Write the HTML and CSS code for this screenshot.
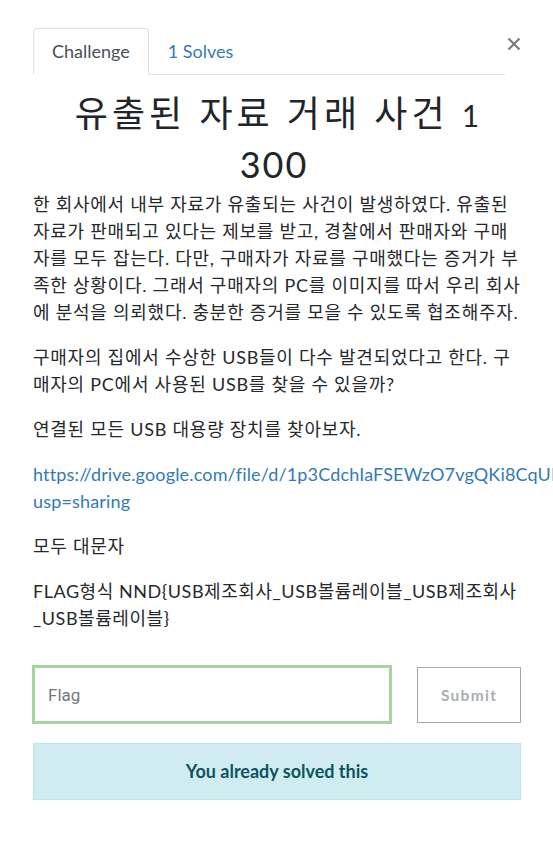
FILE: index.html
```html
<!DOCTYPE html>
<html lang="ko">
<head>
<meta charset="utf-8">
<title>Challenge</title>
<link rel="stylesheet" href="styles.css">
</head>
<body>
<div class="modal">
  <div class="header">
    <ul class="tabs">
      <li class="tab active">Challenge</li>
      <li class="tab"><a class="tab-link" href="#">1 Solves</a></li>
    </ul>
    <button class="close" type="button" aria-label="Close">
      <svg width="14" height="14" viewBox="0 0 14 14"><path d="M1.5 1.5 L12.5 12.5 M12.5 1.5 L1.5 12.5" stroke="#7b7b7b" stroke-width="2.2" fill="none"/></svg>
    </button>
  </div>
  <h2 class="name">유출된 자료 거래 사건 <span class="num">1</span></h2>
  <h3 class="value">300</h3>
  <div class="desc">
    <p>한 회사에서 내부 자료가 유출되는 사건이 발생하였다. 유출된 자료가 판매되고 있다는 제보를 받고, 경찰에서 판매자와 구매자를 모두 잡는다. 다만, 구매자가 자료를 구매했다는 증거가 부족한 상황이다. 그래서 구매자의 PC를 이미지를 따서 우리 회사에 분석을 의뢰했다. 충분한 증거를 모을 수 있도록 협조해주자.</p>
    <p>구매자의 집에서 수상한 USB들이 다수 발견되었다고 한다. 구매자의 PC에서 사용된 USB를 찾을 수 있을까?</p>
    <p>연결된 모든 USB 대용량 장치를 찾아보자.</p>
    <p><a class="link" href="#">https://drive.google.com/file/d/1p3CdchIaFSEWzO7vgQKi8CqUFx2mK9Lr/view?usp=sharing</a></p>
    <p>모두 대문자</p>
    <p class="format">FLAG형식 NND{USB제조회사_USB볼륨레이블_USB제조회사_USB볼륨레이블}</p>
  </div>
  <div class="form">
    <input class="flag" type="text" placeholder="Flag">
    <button class="submit" type="button">Submit</button>
  </div>
  <div class="alert">You already solved this</div>
</div>
</body>
</html>
```
FILE: styles.css
```css
html {
  overflow: hidden;
}
body {
  margin: 0;
  background: #fff;
  font-family: "Lato", "Noto Sans CJK KR", sans-serif;
  font-size: 18px;
  line-height: 1.5;
  color: #212529;
}
.modal {
  width: 488px;
  padding: 28px 0 0 33px;
}
.header {
  display: flex;
  align-items: flex-start;
}
.tabs {
  flex: 1;
  display: flex;
  margin: 0;
  padding: 0;
  list-style: none;
  border-bottom: 1px solid #dee2e6;
}
.tab {
  padding: 9px 18px;
  margin-bottom: -1px;
  border: 1px solid transparent;
  border-top-left-radius: 4px;
  border-top-right-radius: 4px;
  color: #495057;
}
.tab.active {
  border-color: #dee2e6 #dee2e6 #fff;
  background: #fff;
}
.tab-link {
  color: #337ab7;
  text-decoration: none;
}
.close {
  margin: 9px 0 0 1px;
  padding: 0;
  width: 15px;
  height: 14px;
  border: 0;
  background: none;
  display: flex;
  justify-content: center;
}
.name {
  margin: 17px 0 0;
  text-align: center;
  font-weight: 400;
  font-size: 36px;
  line-height: 43px;
  letter-spacing: 4px;
  color: #212529;
}
.num {
  font-size: 30px;
  letter-spacing: 0;
}
.value {
  margin: 6px 6px 0 0;
  text-align: center;
  font-weight: 400;
  font-size: 36px;
  line-height: 42px;
  letter-spacing: 2px;
  color: #212529;
}
.desc {
  margin-top: 6px;
  letter-spacing: 0.75px;
  color: #26292c;
}
.desc p {
  margin: 0 0 18px;
}
.desc .format {
  letter-spacing: 0.55px;
}
.link {
  color: #337ab7;
  text-decoration: none;
  letter-spacing: 0.16px;
}
.form {
  display: flex;
  align-items: center;
  gap: 25px;
  margin-top: 33px;
  margin-left: -1px;
}
.flag {
  box-sizing: border-box;
  width: 361px;
  height: 59px;
  padding: 0 13px;
  border: 3px solid #a6d4a0;
  font-family: "Roboto", "Liberation Sans", sans-serif;
  font-size: 17px;
  color: #495057;
  outline: none;
}
.flag::placeholder {
  color: #737980;
}
.submit {
  box-sizing: border-box;
  width: 104px;
  height: 56px;
  border: 1px solid #a3a8ae;
  background: #fff;
  color: #a9aeb3;
  font-family: "Lato", sans-serif;
  font-weight: 700;
  font-size: 15.5px;
  letter-spacing: 1.3px;
}
.alert {
  box-sizing: border-box;
  margin-top: 19px;
  height: 57px;
  display: flex;
  align-items: center;
  justify-content: center;
  background: #d1ecf1;
  border: 1px solid #bee5eb;
  color: #0c5460;
  font-weight: 700;
  font-size: 18px;
}
```
